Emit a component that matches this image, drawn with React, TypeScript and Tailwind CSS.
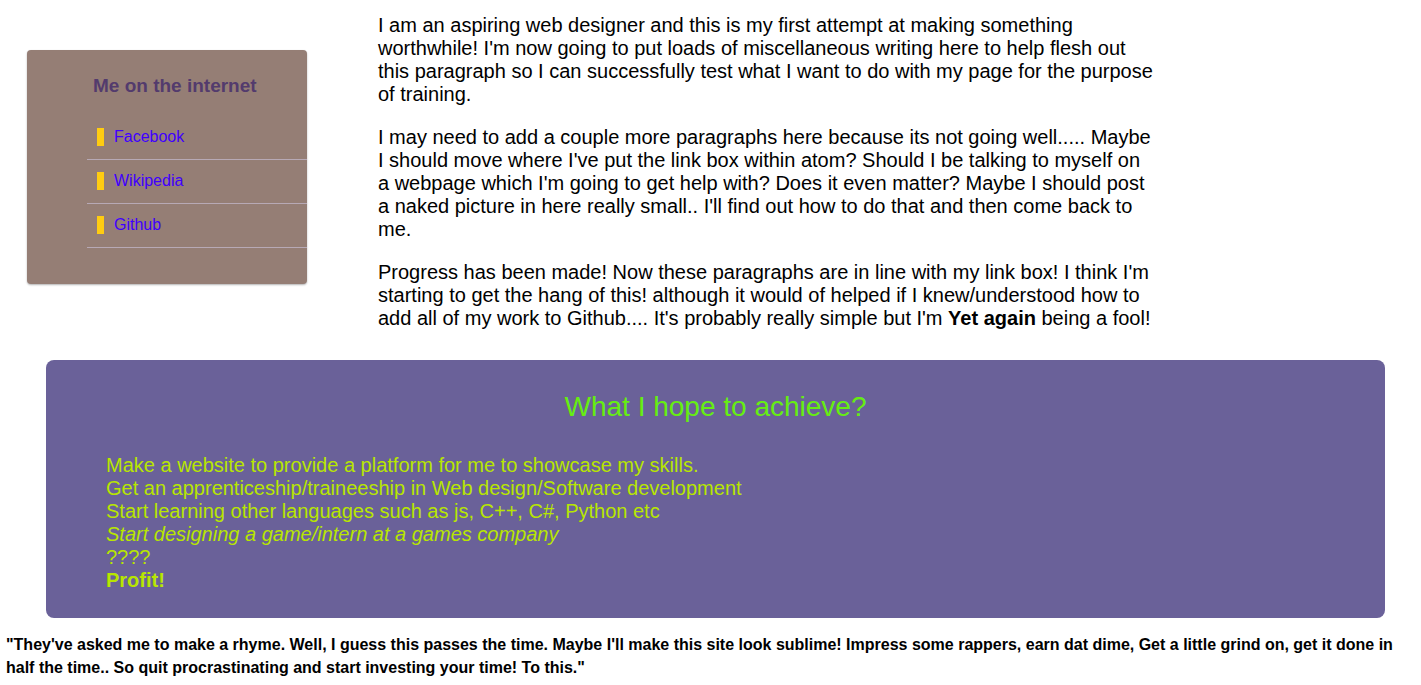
const links = [
  { label: "Facebook", href: "#facebook" },
  { label: "Wikipedia", href: "#wikipedia" },
  { label: "Github", href: "#github" },
];

function LinkBox() {
  return (
    <nav
      aria-labelledby="links-title"
      className="mt-9 w-[280px] shrink-0 self-start rounded bg-[#957e75] pt-5 pb-9 shadow-[0_1px_2px_rgba(0,0,0,0.3)]"
    >
      <h2 id="links-title" className="pl-[66px] text-[19px] leading-8 font-bold text-[#533b6d]">
        Me on the internet
      </h2>
      <ul className="mt-3.5 ml-[60px]">
        {links.map((link) => (
          <li key={link.label} className="h-11 border-b border-[#b7a9b5] pt-3 pl-2.5">
            <a
              href={link.href}
              className="block border-l-[7px] border-[#ffcc11] pl-2.5 text-base leading-[18px] text-[#3f00ff]"
            >
              {link.label}
            </a>
          </li>
        ))}
      </ul>
    </nav>
  );
}

export default function App() {
  return (
    <div className="bg-white px-1.5 pt-3.5 font-['Liberation_Sans',Arial,sans-serif] text-black">
      <div className="flex gap-[71px] pl-[21px]">
        <LinkBox />
        <main className="max-w-[776px] space-y-5 text-xl leading-[23px]">
          <p>
            I am an aspiring web designer and this is my first attempt at making something
            worthwhile! I'm now going to put loads of miscellaneous writing here to help flesh out
            this paragraph so I can successfully test what I want to do with my page for the purpose
            of training.
          </p>
          <p>
            I may need to add a couple more paragraphs here because its not going well..... Maybe I
            should move where I've put the link box within atom? Should I be talking to myself on a
            webpage which I'm going to get help with? Does it even matter? Maybe I should post a
            naked picture in here really small.. I'll find out how to do that and then come back to
            me.
          </p>
          <p>
            Progress has been made! Now these paragraphs are in line with my link box! I think I'm
            starting to get the hang of this! although it would of helped if I knew/understood how
            to add all of my work to Github.... It's probably really simple but I'm{" "}
            <b>Yet again</b> being a fool!
          </p>
        </main>
      </div>

      <section className="mt-[30px] mr-[30px] ml-10 rounded-lg bg-[#6a6199] px-[60px] pt-[30px] pb-[26px]">
        <h2 className="text-center text-[28px] leading-[34px] text-[#66ee11]">
          What I hope to achieve?
        </h2>
        <ul className="mt-[30px] text-xl leading-[23px] text-[#b8e600]">
          <li>Make a website to provide a platform for me to showcase my skills.</li>
          <li>Get an apprenticeship/traineeship in Web design/Software development</li>
          <li>Start learning other languages such as js, C++, C#, Python etc</li>
          <li className="italic">Start designing a game/intern at a games company</li>
          <li>????</li>
          <li className="font-bold">Profit!</li>
        </ul>
      </section>

      <footer className="mt-[15px] text-base leading-[23px] font-bold">
        "They've asked me to make a rhyme. Well, I guess this passes the time. Maybe I'll make this
        site look sublime! Impress some rappers, earn dat dime, Get a little grind on, get it done in
        half the time.. So quit procrastinating and start investing your time! To this."
      </footer>
    </div>
  );
}
